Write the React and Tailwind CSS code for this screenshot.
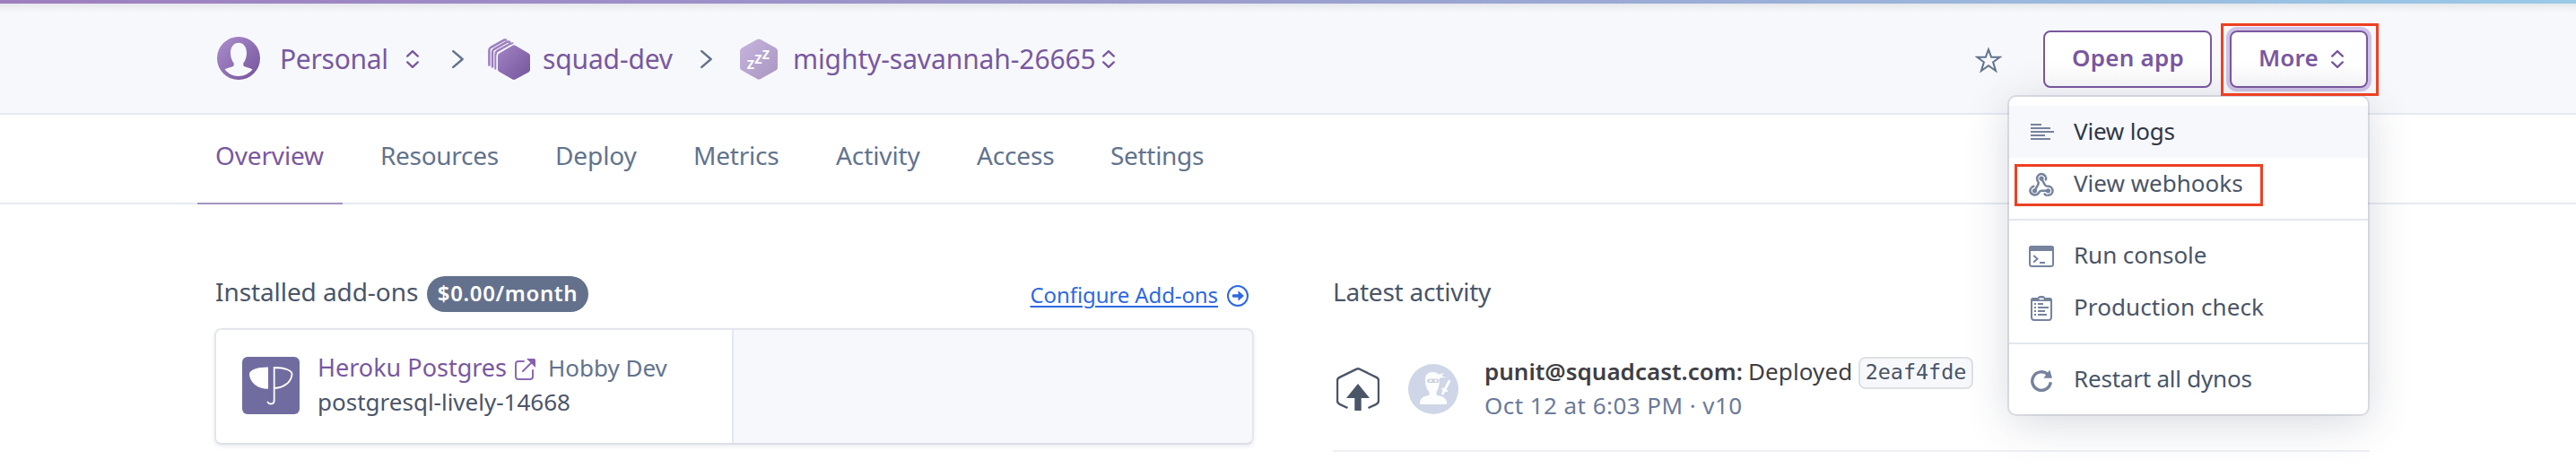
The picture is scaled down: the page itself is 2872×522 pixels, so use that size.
const SortIcon = ({ className = "" }) => (
  <svg className={`h-5 w-[14px] shrink-0 ${className}`} viewBox="0 0 14 20" fill="none" stroke="#79589f" strokeWidth="2.3" strokeLinecap="round" strokeLinejoin="round">
    <path d="M1.2 6.6 7 1.1l5.8 5.5M1.2 13.4 7 18.9l5.8-5.5" />
  </svg>
);

const Chevron = ({ className = "" }) => (
  <svg className={`h-5 w-[13px] shrink-0 ${className}`} viewBox="0 0 13 20" fill="none" stroke="#62738d" strokeWidth="2.5" strokeLinecap="round" strokeLinejoin="round">
    <path d="M1.3 1.1 11.6 10 1.3 18.9" />
  </svg>
);

const Gradient = ({ id, from, to }) => (
  <defs>
    <linearGradient id={id} x1="0" y1="0" x2="1" y2="1">
      <stop offset="0" stopColor={from} />
      <stop offset="1" stopColor={to} />
    </linearGradient>
  </defs>
);

const PersonIcon = () => (
  <svg className="size-12 shrink-0" viewBox="0 0 48 48">
    <Gradient id="person" from="#ad8fce" to="#73529a" />
    <circle cx="24" cy="24" r="24" fill="url(#person)" />
    <path fill="#f7f8fb" d="M24 6.8c-5.4 0-9 4.600-9 11.200 0 4.400 1.400 8.600 3.500 11.200.6 1.600.3 3-.7 3.800-2.400 1.200-6.600 1.300-9.300 3.600C12.300 41.200 17.900 44 24 44s11.700-2.800 15.500-7.400c-2.700-2.300-6.900-2.400-9.300-3.600-1-.8-1.300-2.200-.7-3.800C31.600 26.600 33 22.400 33 18c0-6.600-3.600-11.200-9-11.200Z" />
  </svg>
);

const TeamIcon = () => (
  <svg className="h-[46px] w-[47px] shrink-0" viewBox="0 0 47 46">
    <Gradient id="team" from="#a385c6" to="#74539a" />
    <g fill="none" stroke="#9c7ebf" strokeWidth="2.500" strokeLinejoin="round">
      <path d="M1.400 30.500V13.200Q1.400 11 3.300 9.800L18 1.700q1.500-.6 2.900.3" />
      <path d="M5 32.500V15.200Q5 13 6.900 11.800L21 3.900q1.500-.8 4 .3" />
      <path d="M8.600 34.500V17.200q0-2.200 1.900-3.400L24.600 6q1.500-.8 3.700-.3" />
    </g>
    <path fill="url(#team)" stroke="#f7f8fb" strokeWidth="1.600" d="M27 7.100q2-1.200 4 0l14.800 8.700q2 1.200 2 3.400v15.600q0 2.200-2 3.400L31 46.200q-2 1.200-4 0L12.200 37.800q-2-1.200-2-3.400V19.200q0-2.200 2-3.400Z" />
  </svg>
);

const AppIcon = () => (
  <svg className="h-[46px] w-[42px] shrink-0" viewBox="0 0 42 46">
    <Gradient id="app" from="#c6b5de" to="#a995c1" />
    <path fill="url(#app)" d="M19 1.100q2-1.100 4 0L40 10.400q2 1.200 2 3.400v18.400q0 2.200-2 3.400L23 44.900q-2 1.100-4 0L2 35.600q-2-1.200-2-3.400V13.800q0-2.200 2-3.400Z" />
    <g fill="#fff" fontFamily="Noto Sans, sans-serif" fontWeight="600" fontSize="18">
      <text x="7.500" y="33.500">z</text>
      <text x="16" y="28.300">z</text>
      <text x="24.500" y="23">z</text>
    </g>
  </svg>
);

const Crumb = ({ className, children }) => (
  <span className={`whitespace-nowrap text-[30px] text-[#79589f] ${className}`}>{children}</span>
);

const tabs = [
  ["Resources", "w-[195px] tracking-[-0.3px]"],
  ["Deploy", "w-[154px] tracking-[-0.1px]"],
  ["Metrics", "w-[159px] tracking-[-0.2px]"],
  ["Activity", "w-[157px] tracking-[-0.1px]"],
  ["Access", "w-[149px] tracking-[-0.15px]"],
  ["Settings", "tracking-[-0.3px]"],
];

const MenuSvg = ({ children }) => (
  <svg className="size-[30px] shrink-0" viewBox="0 0 30 30">
    {children}
  </svg>
);

const MenuItem = ({ icon, label, className = "" }) => (
  <div className={`relative flex h-[58px] items-center pl-[21px] ${className}`}>
    {icon}
    <span className="ml-[21px] whitespace-nowrap pb-[2px] text-[26px]">{label}</span>
  </div>
);

const C = "#76839d";

const LogsIcon = (
  <MenuSvg>
    <path d="M3 7h12M3 11h22M3 15h26M3 19h16M3 23h22" stroke={C} strokeWidth="2" />
  </MenuSvg>
);
const WebhookIcon = (
  <MenuSvg>
    <g transform="translate(0 1.600) scale(1.250)" fill="none" stroke={C} strokeWidth="2" strokeLinecap="round" strokeLinejoin="round">
      <path d="M18 16.980h-5.990c-1.100 0-1.950.940-2.480 1.900A4.200 4.200 0 0 1 1.900 17c.010-.700.200-1.400.570-2" />
      <path d="m6 17 3.130-5.780c.530-.970.100-2.180-.500-3.100a4 4 0 1 1 6.890-4.060" />
      <path d="m12 6 3.130 5.730C15.660 12.700 16.900 13 18 13a4 4 0 0 1 0 8" />
      <path d="M3.600 13.700Q4.200 13.200 5 13M15.900 7q.4-.8.2-1.600M14.800 19.800q.7.800 1.700 1.200" />
      <g fill={C} stroke="none">
        <circle cx="6" cy="17" r="2.100" />
        <circle cx="12" cy="6" r="2.100" />
        <circle cx="18" cy="17" r="2.100" />
      </g>
    </g>
  </MenuSvg>
);
const ConsoleIcon = (
  <MenuSvg>
    <rect x="2" y="5" width="26" height="22" rx="2.500" fill="none" stroke={C} strokeWidth="2" />
    <path d="M1 10V7q0-3 3-3h22q3 0 3 3v3Z" fill={C} />
    <path d="m6.200 15 4.300 3.800-4.300 3.800" fill="none" stroke={C} strokeWidth="2" />
    <path d="M13 23h6" stroke={C} strokeWidth="2" />
  </MenuSvg>
);
const ChecklistIcon = (
  <MenuSvg>
    <rect x="4" y="5" width="22" height="24" rx="3" fill="none" stroke={C} strokeWidth="2" />
    <path d="M3 8V7q0-3 3-3h4.500l1-1q1-1 2-1h3q1 0 2 1l1 1H24q3 0 3 3v1Z" fill={C} />
    <path d="M12.500 4.500h5v1.800h-5Z" fill="#fff" />
    <path d="M7 11h2M7 15h2M7 19h2M7 23h2M11 11h6M11 15h12M11 19h8M11 23h10" stroke={C} strokeWidth="2" />
  </MenuSvg>
);
const RestartIcon = (
  <MenuSvg>
    <path d="M25.300 18.300A10.300 10.300 0 1 1 22 9.400" fill="none" stroke={C} strokeWidth="3.400" />
    <path d="M24.300 4.500 27 13.800H17.400Z" fill={C} />
  </MenuSvg>
);

const ExternalIcon = () => (
  <svg className="h-6 w-[23px] shrink-0" viewBox="0 0 23 24">
    <g fill="none" stroke="#8b69b2">
      <path d="M10 3H4Q1 3 1 6v14q0 3 3 3h13q3 0 3-3v-7" strokeWidth="2" strokeLinecap="round" />
      <path d="M9 14 19 4" strokeWidth="2.200" strokeLinecap="round" />
    </g>
    <path d="M13 0h8.500Q23 0 23 1.500V10Z" fill="#8660ad" />
  </svg>
);

const PostgresIcon = () => (
  <svg className="size-16 shrink-0" viewBox="0 0 64 64">
    <rect width="64" height="64" rx="6" fill="#716ca0" />
    <path fill="#fff" d="M29 11.500v24.300C17 36 8.500 28.500 8 19.500c-.2-4.500 8-8 21-8Z" />
    <path fill="none" stroke="#fff" strokeWidth="1.800" strokeLinecap="round" d="M28.500 50.500c1.200 2.700 7.200 3.200 7.200-2V12C48 12 56 15.500 55.500 19.800 54.500 28 47 34.500 36 35" />
  </svg>
);

const DeployIcon = () => (
  <svg className="size-12 shrink-0" viewBox="0 0 48 48">
    <path d="M12.500 45 3.500 40.800Q1 39.500 1 37V14.500q0-2.300 2-3.400L22 1.800q2-1 4 0l19 9.300q2 1.100 2 3.400V37q0 2.500-2.500 3.800L35.500 45" fill="none" stroke="#4a5568" strokeWidth="2.400" />
    <path d="M24 18 37 34h-9.300v14h-7.400V34H11Z" fill="#4a5568" />
  </svg>
);

const NinjaIcon = () => (
  <svg className="size-14 shrink-0" viewBox="0 0 56 56">
    <circle cx="28" cy="28" r="28" fill="#ced6e7" />
    <g fill="#fcfdff">
      <path d="M19 17c0-5 3.500-8 8-8 3 0 5.200.8 6.700 2.500L40.500 10l-3.600 3.200 5.100 1.400-7.200 1.200c.1 6-.3 11.500-3.300 15.200v3.500c3 1.700 9.500.7 11.500 7.500v3H13v-3c2-6.800 8-5.800 10.500-7.500V31c-3.700-3.500-4.500-8-4.500-14Z" />
      <path d="m45 17.500 2.500 1.500-5 9.500 2 1.300-1.200 1.700-1.800-1L39 35l-2-1 1.500-5-1.500-1 1-1.700 2 1Z" />
    </g>
    <rect x="21" y="16.500" width="13.500" height="4.600" rx="2.300" fill="#cdd3df" />
    <circle cx="25" cy="18.800" r="1.200" fill="#fff" />
    <circle cx="30.800" cy="18.800" r="1.200" fill="#fff" />
  </svg>
);

const ArrowCircle = () => (
  <svg className="size-6 shrink-0" viewBox="0 0 24 24">
    <circle cx="12" cy="12" r="11" fill="none" stroke="#2d69e0" strokeWidth="2" />
    <path d="M7 10.200h5.500V6.300L19 12l-6.500 5.700v-3.900H7q-1.200 0-1.200-1.800T7 10.200Z" fill="#2d69e0" />
  </svg>
);

export default function App() {
  return (
    <div className="h-[522px] w-[2872px] overflow-hidden bg-white font-['Noto_Sans',sans-serif] font-[370] text-[#4a5568]">
      <div className="h-1 bg-linear-to-r from-[#9e7ebf] via-[#9a9fcf] to-[#99cae8]" />

      <header className="flex h-[124px] items-center border-b-2 border-[#e6eaf1] bg-[#f7f8fb] bg-linear-to-b from-[#e6e7ea] via-[#f7f8fb] via-8% to-[#f7f8fb] pl-[242px]">
        <PersonIcon />
        <Crumb className="ml-[22px] w-[141px] tracking-[-0.3px]">Personal</Crumb>
        <SortIcon className="mt-0.5" />
        <Chevron className="ml-[37px] mt-0.5" />
        <div className="ml-[27px] mt-0.5 flex"><TeamIcon /></div>
        <Crumb className="ml-[14px] w-[176px] tracking-[-0.15px]">squad-dev</Crumb>
        <Chevron className="mt-0.5" />
        <div className="ml-[31px] mt-0.5 flex"><AppIcon /></div>
        <Crumb className="ml-[17px] w-[345px] tracking-[-0.1px]">mighty-savannah-26665</Crumb>
        <SortIcon className="mt-0.5" />

        <svg className="ml-[959px] mt-1 size-[30px] shrink-0" viewBox="0 0 30 30" fill="none" stroke="#62738d" strokeWidth="2">
          <path d="m15 3.200 3.100 8.500 9.500.1-7.500 5.500 3 9.700L15 21.300 6.900 27l3-9.700-7.500-5.500 9.500-.1Z" />
        </svg>
        <button className="ml-[46px] mt-0.5 flex h-16 w-[188px] shrink-0 items-center rounded-lg border-2 border-[#79589f] bg-linear-to-b from-white via-white via-60% to-[#fafafb] pl-[30px] pb-[4px] text-[26px] font-semibold tracking-[0.25px] whitespace-nowrap text-[#79589f]">
          Open app
        </button>
        <div className="relative ml-5 mt-0.5 shrink-0">
          <button className="flex h-16 w-[154px] items-center rounded-lg border-2 border-[#79589f] bg-linear-to-b from-white via-white via-60% to-[#f8f8fa] pl-[30px] text-[#79589f] ring-4 ring-[#cfc2e7]">
            <span className="w-[81px] pb-[4px] text-left text-[26px] font-semibold tracking-[0.2px]">More</span>
            <SortIcon />
          </button>
          <div className="absolute -left-[10px] -top-[8px] z-30 h-[81px] w-[176px] border-[3px] border-[#ee4024]" />

          <div className="absolute -left-[246px] top-[74px] z-20 w-[400px] rounded-lg bg-white py-[10px] shadow-[0_0_0_2px_rgba(60,70,100,0.13),0_8px_50px_rgba(50,60,90,0.20)]">
            <MenuItem icon={LogsIcon} label="View logs" className="bg-[#f7f8fb] tracking-[-0.2px] text-[#2f3746]" />
            <div className="relative">
              <MenuItem icon={WebhookIcon} label="View webhooks" />
              <div className="absolute left-[6px] top-[7px] h-[47px] w-[277px] border-[3px] border-[#ee4024]" />
            </div>
            <div className="my-[10px] h-0.5 bg-[#e3e7ef]" />
            <MenuItem icon={ConsoleIcon} label="Run console" className="tracking-[-0.05px]" />
            <MenuItem icon={ChecklistIcon} label="Production check" className="tracking-[0.1px]" />
            <div className="my-[10px] h-0.5 bg-[#e3e7ef]" />
            <MenuItem icon={RestartIcon} label="Restart all dynos" className="tracking-[-0.22px]" />
          </div>
        </div>
      </header>

      <nav className="flex h-[100px] border-b-2 border-[#e6eaf1] pl-[220px] text-[28px] text-[#62738d]">
        <div className="mr-[42px] flex h-[100px] w-[162px] items-center border-b-2 border-[#a394c2] pb-[8px] pl-5 tracking-[-0.15px] text-[#79589f]">Overview</div>
        {tabs.map(([label, cls]) => (
          <div key={label} className={`flex h-[98px] items-center pb-[8px] ${cls}`}>{label}</div>
        ))}
      </nav>

      <main className="flex gap-[88px] pl-[239px] pt-20">
        <section className="w-[1159px]">
          <div className="flex h-10 items-center">
            <h2 className="w-[237px] whitespace-nowrap pb-[6px] pl-px text-[28px] tracking-[-0.08px]">Installed add-ons</h2>
            <span className="flex h-10 w-[180px] items-center justify-center rounded-full bg-[#64718c] pb-[3px] text-[24px] font-semibold tracking-[0.65px] text-white">$0.00/month</span>
            <a className="ml-auto pt-0.5 text-[24px] tracking-[-0.1px] text-[#2d69e0] underline decoration-2 underline-offset-[3px]">Configure Add-ons</a>
            <span className="ml-[10px] mr-[6px] flex pt-1"><ArrowCircle /></span>
          </div>
          <div className="mt-[18px] flex h-[130px] overflow-hidden rounded-lg border-2 border-[#e3e6ec] border-b-[#dcdfe7] bg-[#f7f8fb] shadow-[0_2px_4px_rgba(60,70,100,0.10)]">
            <div className="flex w-[577px] items-center border-r-2 border-[#e3e7ef] bg-white pl-[29px]">
              <span className="flex pb-0.5"><PostgresIcon /></span>
              <div className="ml-5 whitespace-nowrap pb-1">
                <div className="flex h-[38px] items-center">
                  <span className="w-[220px] text-[27px] text-[#79589f]">Heroku Postgres</span>
                  <span className="flex pt-1"><ExternalIcon /></span>
                  <span className="ml-[14px] text-[26px] text-[#62738d]">Hobby Dev</span>
                </div>
                <div className="flex h-[38px] items-center text-[26px]">postgresql-lively-14668</div>
              </div>
            </div>
          </div>
        </section>

        <section className="w-[1156px]">
          <div className="flex h-10 items-center">
            <h2 className="whitespace-nowrap pb-[6px] text-[28px] tracking-[-0.22px]">Latest activity</h2>
          </div>
          <div className="mt-[18px] flex h-[138px] items-center border-b-2 border-[#eeeff5] pl-1">
            <DeployIcon />
            <span className="ml-8 flex"><NinjaIcon /></span>
            <div className="ml-[29px] whitespace-nowrap pb-[2px] text-[26px]">
              <div className="flex h-[38px] items-center text-[#3f3f44]">
                <span className="w-[294px] font-semibold">punit@squadcast.com:</span>
                <span className="w-[123px] tracking-[0.1px]">Deployed</span>
                <code className="mt-1 flex h-9 w-32 items-center justify-center rounded-lg border-2 border-[#dfe1e5] bg-[#f7f8fb] font-['DejaVu_Sans_Mono',monospace] text-[23.400px] text-[#4a5568]">2eaf4fde</code>
              </div>
              <div className="flex h-[38px] items-center tracking-[0.45px] text-[#6b7a99]">Oct 12 at 6:03 PM · v10</div>
            </div>
          </div>
        </section>
      </main>
    </div>
  );
}
